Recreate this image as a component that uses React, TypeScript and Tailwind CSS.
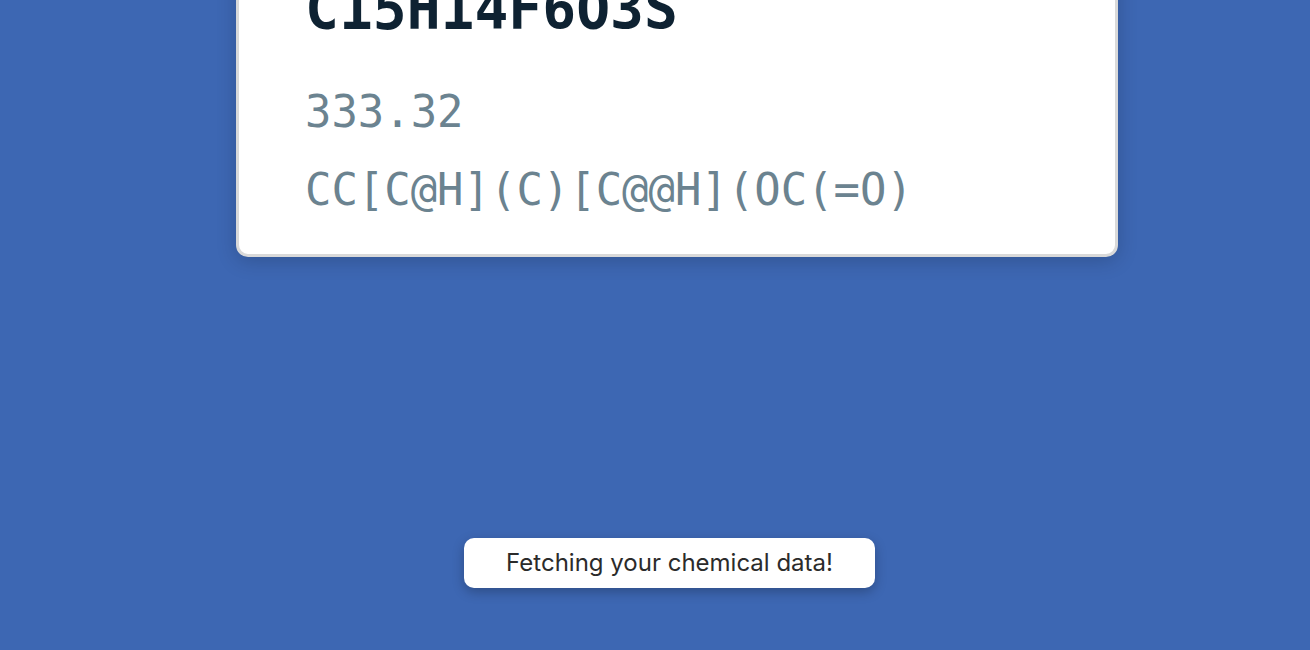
export default function App() {
  return (
    <div className="relative h-[650px] w-[1310px] overflow-hidden bg-[#3d67b3]">
      <div className="ml-[236px] mt-[-61px] w-[882px] rounded-[12px] border-[3px] border-[#d9d9d9] bg-white pb-[25px] pl-[66px] pt-[40px] shadow-[0_4px_20px_rgba(0,0,0,0.18)]" style={{ fontFamily: '"DejaVu Sans Mono", monospace' }}>
        <div className="text-[56.3px] font-bold leading-[56px] text-[#0e2232]">C15H14F6O3S</div>
        <div className="mt-[35px] whitespace-nowrap text-[43.9px] leading-[78px] text-[#6b8390]">333.32</div>
        <div className="whitespace-nowrap text-[43.9px] leading-[78px] text-[#6b8390]">CC[C@H](C)[C@@H](OC(=O)</div>
      </div>
      <div className="absolute left-[464px] top-[538px] flex h-[50px] w-[411px] items-center justify-center rounded-[10px] bg-white text-[24px] text-[#2b2b2b] shadow-[0_4px_12px_rgba(0,0,0,0.25)]" style={{ fontFamily: 'Inter, "Liberation Sans", sans-serif' }}>
        Fetching your chemical data!
      </div>
    </div>
  );
}
